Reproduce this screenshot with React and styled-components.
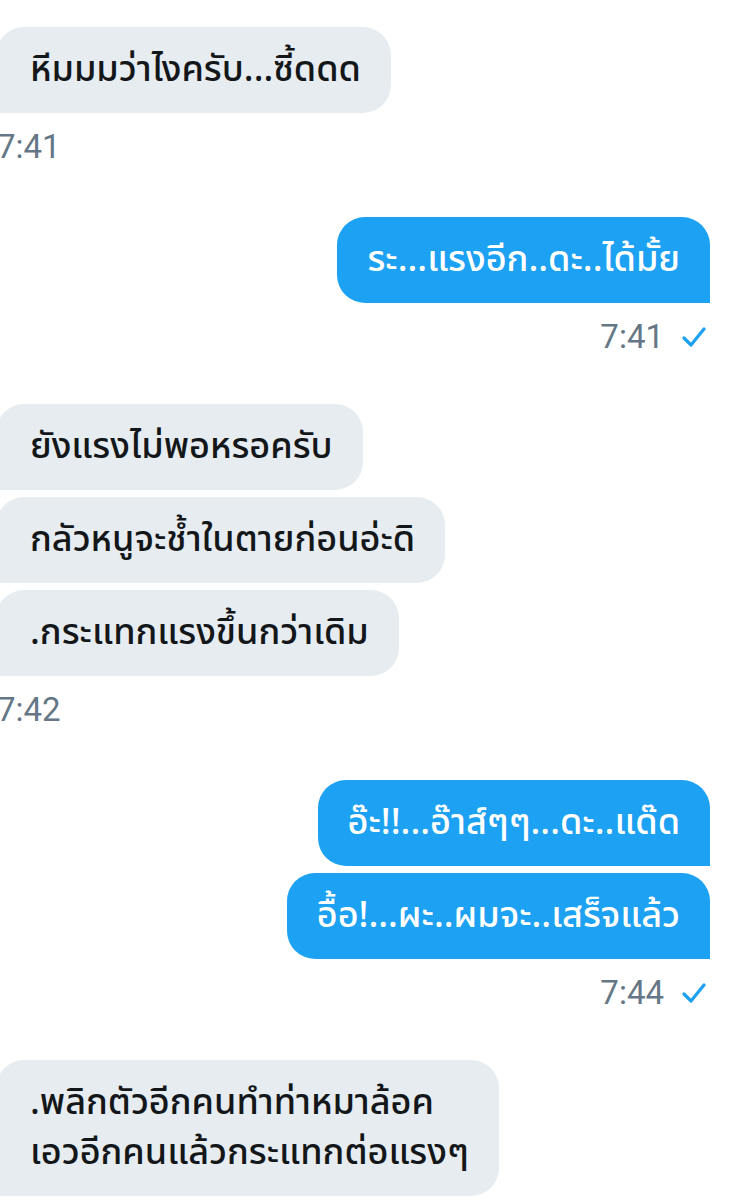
import React from "react";
import styled, { createGlobalStyle } from "styled-components";

const Global = createGlobalStyle`
  html, body { margin: 0; padding: 0; background: #ffffff; }
  body { width: 737px; height: 1200px; overflow: hidden; }
`;

const Thread = styled.div`
  display: flex;
  flex-direction: column;
  padding: 27px 27px 0 0;
  font-family: "Noto Sans Thai", "Noto Sans", Roboto, sans-serif;
`;

const Group = styled.div`
  display: flex;
  flex-direction: column;
  align-items: ${(p) => (p.$mine ? "flex-end" : "flex-start")};
  gap: 7px;
  margin-bottom: ${(p) => (p.$mine ? "49px" : "52px")};
`;

const Bubble = styled.div`
  box-sizing: border-box;
  padding: 18px 30px 18px ${(p) => (p.$mine ? "30px" : "34px")};
  margin-left: ${(p) => (p.$mine ? "0" : "-4px")};
  font-size: 36px;
  font-weight: 500;
  line-height: 50px;
  color: ${(p) => (p.$mine ? "#ffffff" : "#14171a")};
  background: ${(p) => (p.$mine ? "#1da1f2" : "#e6ecf0")};
  border-radius: ${(p) => (p.$mine ? "28px 28px 0 28px" : "28px 28px 28px 0")};
  white-space: pre-line;
`;

const Meta = styled.div`
  display: flex;
  align-items: center;
  gap: 18px;
  margin-top: 9px;
  margin-left: ${(p) => (p.$mine ? "0" : "-3px")};
  margin-right: ${(p) => (p.$mine ? "4px" : "0")};
  font-family: Roboto, "Noto Sans", sans-serif;
  font-size: 33px;
  line-height: 36px;
  color: #657786;
`;

const Check = () => (
  <svg width="24" height="22" viewBox="0 0 24 22" fill="none">
    <path d="M2 12 L9 19 L22 3" stroke="#1da1f2" strokeWidth="3.2" strokeLinecap="round" strokeLinejoin="round" />
  </svg>
);

const messages = [
  { mine: false, texts: ["หีมมมว่าไงครับ...ซี้ดดด"], time: "7:41" },
  { mine: true, texts: ["ระ...แรงอีก..ดะ..ได้มั้ย"], time: "7:41" },
  {
    mine: false,
    texts: ["ยังแรงไม่พอหรอครับ", "กลัวหนูจะช้ำในตายก่อนอ่ะดิ", ".กระแทกแรงขึ้นกว่าเดิม"],
    time: "7:42",
  },
  { mine: true, texts: ["อ๊ะ!!...อ๊าส์ๆๆ...ดะ..แด๊ด", "อื้อ!...ผะ..ผมจะ..เสร็จแล้ว"], time: "7:44" },
  { mine: false, texts: [".พลิกตัวอีกคนทำท่าหมาล้อค\nเอวอีกคนแล้วกระแทกต่อแรงๆ"] },
];

export default function App() {
  return (
    <>
      <Global />
      <Thread>
        {messages.map((m, i) => (
          <Group key={i} $mine={m.mine}>
            {m.texts.map((t, j) => (
              <Bubble key={j} $mine={m.mine}>
                {t}
              </Bubble>
            ))}
            {m.time && (
              <Meta $mine={m.mine}>
                <span>{m.time}</span>
                {m.mine && <Check />}
              </Meta>
            )}
          </Group>
        ))}
      </Thread>
    </>
  );
}
